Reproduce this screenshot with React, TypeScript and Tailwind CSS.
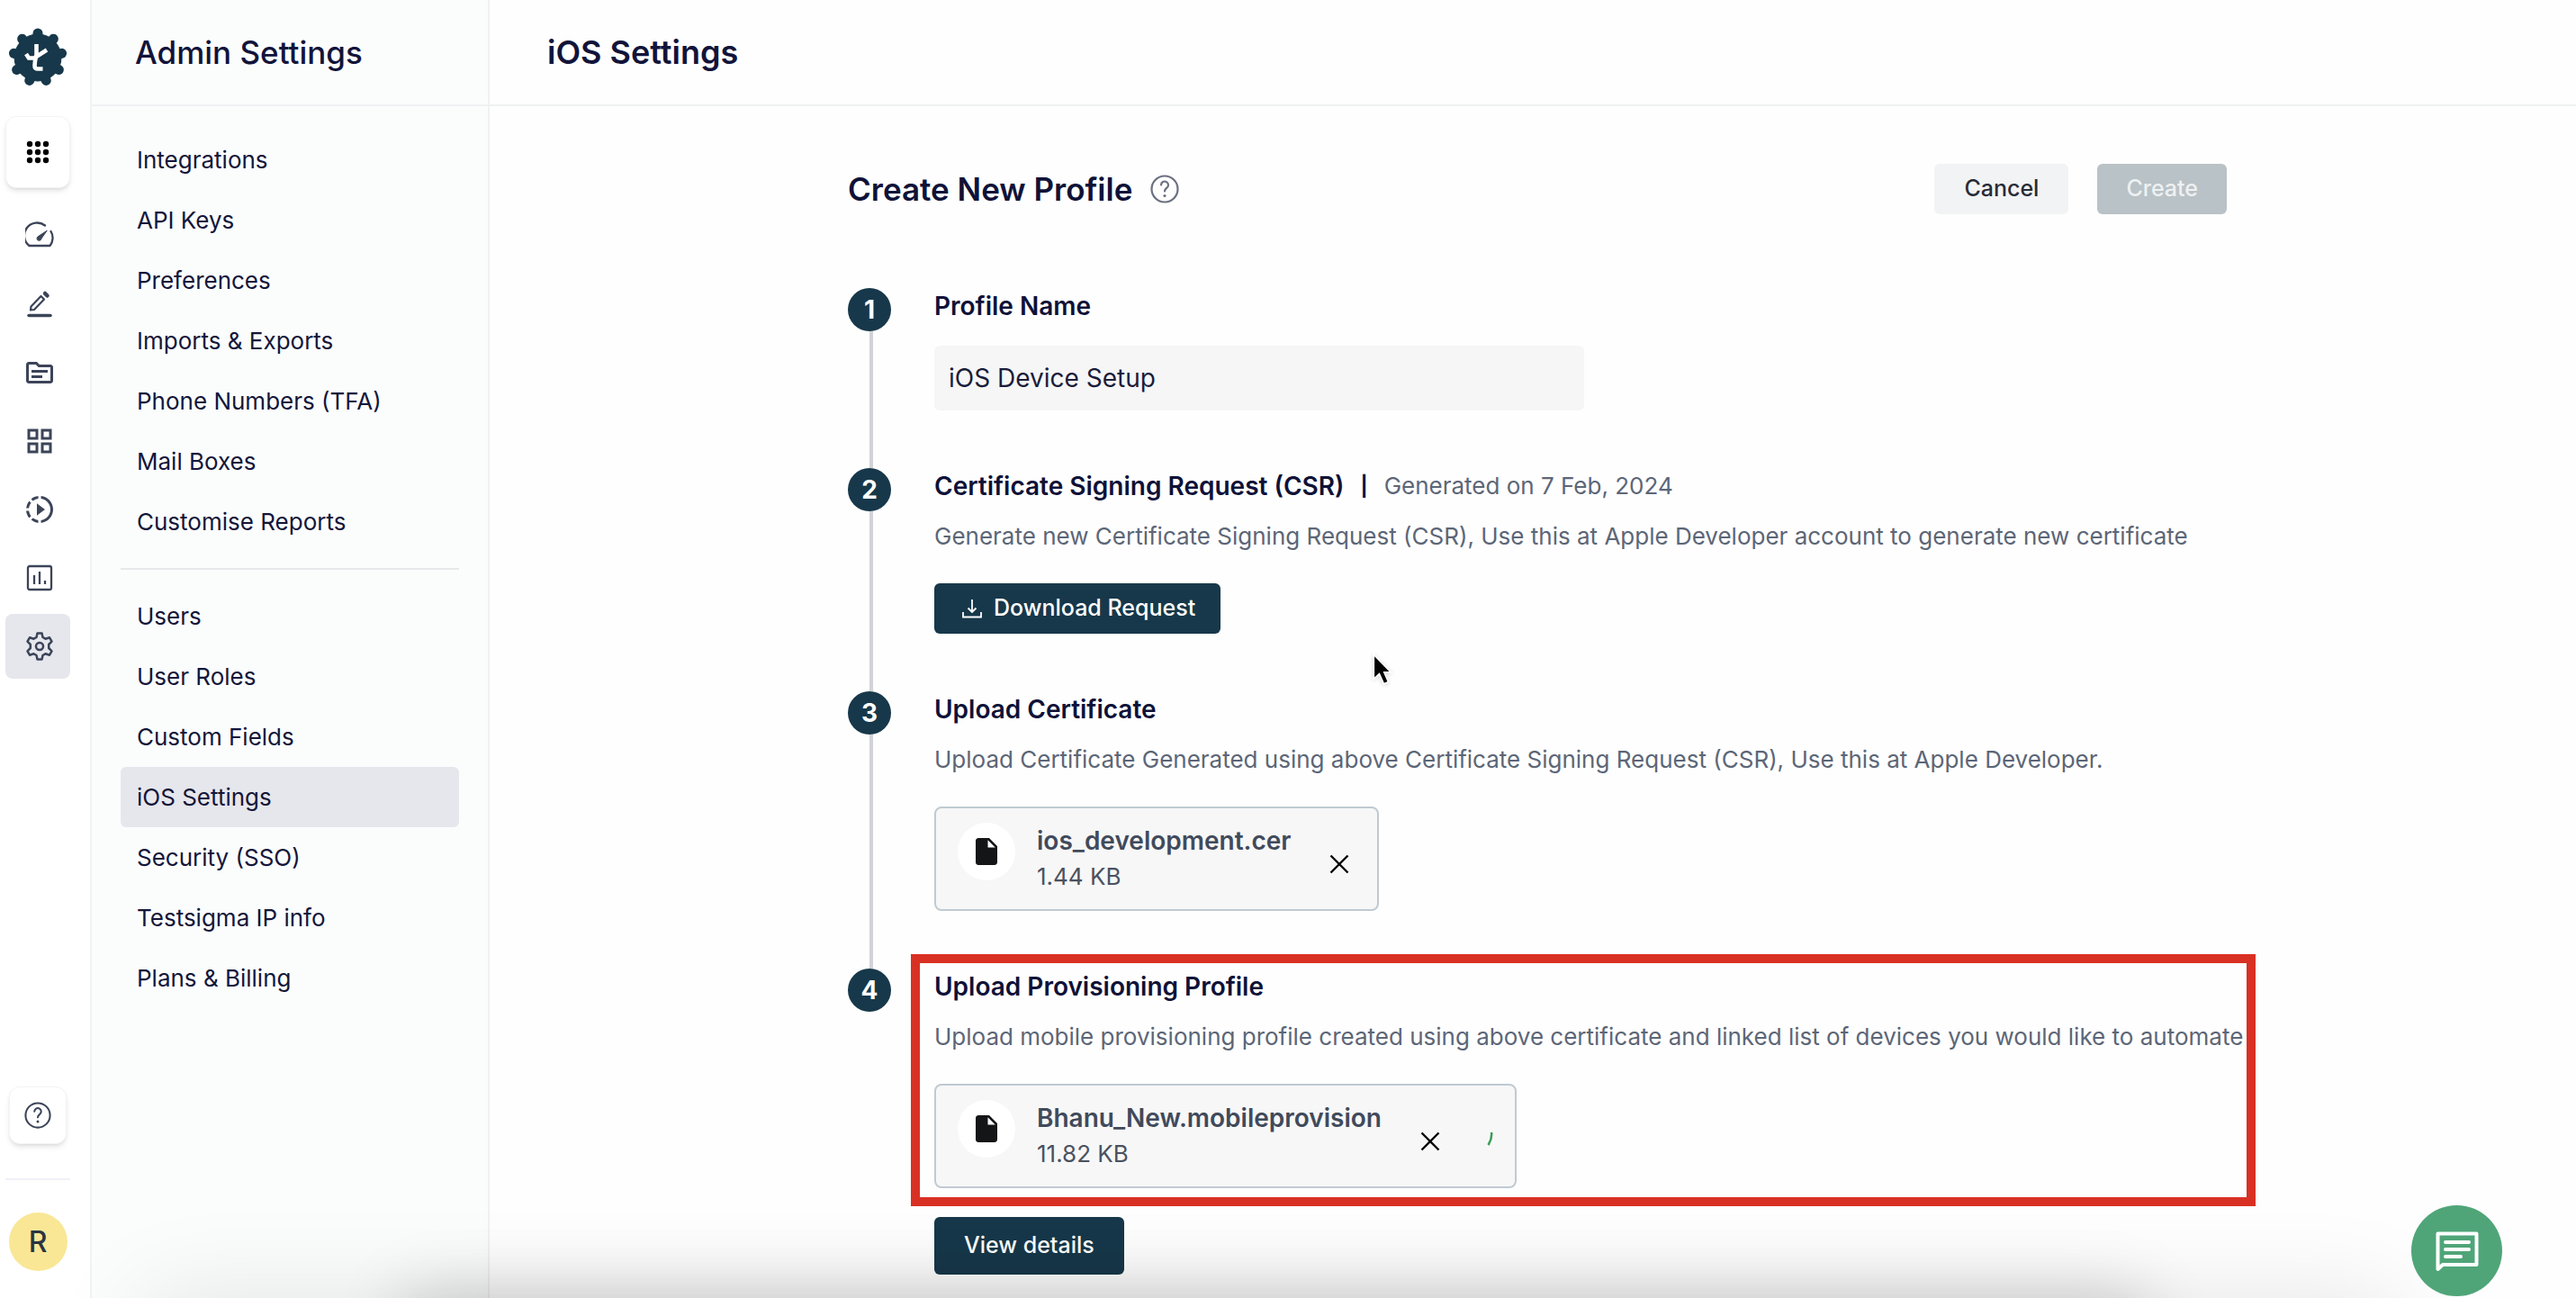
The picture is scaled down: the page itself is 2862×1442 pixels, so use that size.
import { useState } from 'react'
import { MdInsertDriveFile, MdOutlineGridView, MdOutlineSource, MdSlowMotionVideo } from 'react-icons/md'

const workspaceLinks = ['Integrations', 'API Keys', 'Preferences', 'Imports & Exports', 'Phone Numbers (TFA)', 'Mail Boxes', 'Customise Reports']
const accountLinks = ['Users', 'User Roles', 'Custom Fields', 'iOS Settings', 'Security (SSO)', 'Testsigma IP info', 'Plans & Billing']

// nine round teeth around the logo body
const teeth = Array.from({ length: 9 }, (_, i) => {
  const a = (i * 2 * Math.PI) / 9 - Math.PI / 2
  return { x: 33 + 27 * Math.cos(a), y: 33 + 27 * Math.sin(a) }
})

function Logo() {
  return (
    <svg viewBox="0 0 66 66" className="size-[66px]" aria-hidden="true">
      <g fill="#17384a" stroke="#17384a">
        <circle cx="33" cy="33" r="26" />
        {teeth.map((t, i) => (
          <line key={i} x1="33" y1="33" x2={t.x} y2={t.y} strokeWidth="11" strokeLinecap="round" />
        ))}
      </g>
      <g fill="none" stroke="#fff" strokeWidth="4.6">
        <path d="M31.5 18 V30 Q29.5 37 29.5 42 Q29.5 45.500 33 45.500 H38.500" />
        <path d="M20 29 L23 33.500 H29 L43 24.500" />
      </g>
    </svg>
  )
}

function AppsIcon() {
  return (
    <svg viewBox="0 0 26 26" className="size-[26px]" fill="currentColor" aria-hidden="true">
      {[4, 13, 22].map((y) => [4, 13, 22].map((x) => <circle key={`${x}-${y}`} cx={x} cy={y} r="3.2" />))}
    </svg>
  )
}

function GaugeIcon() {
  return (
    <svg viewBox="0 0 32 32" className="size-8" fill="none" stroke="currentColor" strokeWidth="2.3" strokeLinecap="round" strokeLinejoin="round" aria-hidden="true">
      <path d="M22 4.500 A14 14 0 0 0 4.500 27 H27.500 A14 14 0 0 0 28.500 11" />
      <path d="M24 10.500 L18 19 A2.500 2.500 0 1 1 14.500 16.500 Z" fill="currentColor" strokeWidth="1" />
    </svg>
  )
}

function PencilIcon() {
  return (
    <svg viewBox="0 0 32 32" className="size-8" fill="none" stroke="currentColor" strokeWidth="2.2" strokeLinejoin="round" aria-hidden="true">
      <path d="M6 22.500 L6.500 18.500 L17.500 7 L21 10.500 L10 22 Z" />
      <path d="M22 4 L24.500 6.500" strokeWidth="4.500" strokeLinecap="round" />
      <path d="M4 28.500 H28" strokeWidth="3.500" strokeLinecap="round" />
    </svg>
  )
}

function ChartIcon() {
  return (
    <svg viewBox="0 0 32 32" className="size-8" fill="none" stroke="currentColor" strokeWidth="2.3" aria-hidden="true">
      <rect x="3" y="3" width="26" height="26" rx="2" />
      <path d="M10 13 V23 M16 9 V23 M22 19 V23" />
    </svg>
  )
}

function GearIcon() {
  return (
    <svg viewBox="0 0 32 32" className="size-8" fill="none" stroke="currentColor" strokeWidth="2.5" strokeLinejoin="round" aria-hidden="true">
      <path d="M13.500 1.500 H18.500 L19.500 6 L22.500 7.700 L27 6.300 L29.500 10.700 L26.200 14 V18 L29.500 21.300 L27 25.700 L22.500 24.300 L19.500 26 L18.500 30.500 H13.500 L12.500 26 L9.500 24.300 L5 25.700 L2.500 21.300 L5.800 18 V14 L2.500 10.700 L5 6.300 L9.500 7.700 L12.500 6 Z" />
      <circle cx="16" cy="16" r="4" />
    </svg>
  )
}

function HelpIcon({ className }: { className: string }) {
  return (
    <svg viewBox="0 0 32 32" className={className} fill="none" stroke="currentColor" strokeWidth="2.2" strokeLinecap="round" aria-hidden="true">
      <circle cx="16" cy="16" r="14.5" />
      <path d="M12 11.500 A4 4 0 1 1 18 15 Q16 16.500 16 18.500" />
      <circle cx="16" cy="23.500" r="1.6" fill="currentColor" stroke="none" />
    </svg>
  )
}

function DownloadIcon() {
  return (
    <svg viewBox="0 0 24 24" className="size-6" fill="none" stroke="currentColor" strokeWidth="1.8" aria-hidden="true">
      <path d="M12 2 V16 M7.500 11.500 L12 16 L16.500 11.500 M2 16 V21.500 H22 V16" />
    </svg>
  )
}

function CloseIcon() {
  return (
    <svg viewBox="0 0 36 36" className="size-9" fill="none" stroke="currentColor" strokeWidth="2.4" aria-hidden="true">
      <path d="M8.500 8.500 L27.500 27.500 M27.500 8.500 L8.500 27.500" />
    </svg>
  )
}

const railIcons = [
  { label: 'Dashboard', icon: <GaugeIcon /> },
  { label: 'Create Tests', icon: <PencilIcon /> },
  { label: 'Test Data', icon: <MdOutlineSource className="size-9" /> },
  { label: 'Addons', icon: <MdOutlineGridView className="size-9" /> },
  { label: 'Runs', icon: <MdSlowMotionVideo className="size-9" /> },
  { label: 'Reports', icon: <ChartIcon /> },
  { label: 'Settings', icon: <GearIcon />, active: true },
]

function Rail() {
  return (
    <nav aria-label="Main" className="flex w-[102px] shrink-0 flex-col border-r-2 border-[#f0f3f3] bg-white pt-[31px] pb-[30px] pl-[6px] text-[#3c4459]">
      <div className="flex w-[72px] flex-col items-center">
        <a href="#" aria-label="Home"><Logo /></a>
        <button type="button" aria-label="Apps" className="mt-8 flex h-20 w-[72px] items-center justify-center rounded-xl border border-gray-100 bg-white text-black shadow-md">
          <AppsIcon />
        </button>
        <div className="mt-[17px] flex flex-col gap-1">
          {railIcons.map((item) => (
            <a
              key={item.label}
              href="#"
              aria-label={item.label}
              className={`flex size-[72px] items-center justify-center rounded-lg pl-1 ${item.active ? 'bg-[#e6e7ec]' : ''}`}
            >
              {item.icon}
            </a>
          ))}
        </div>
      </div>
      <div className="mt-auto flex w-[72px] flex-col items-center">
        <button type="button" aria-label="Help" className="flex size-16 items-center justify-center rounded-xl border border-gray-100 bg-white shadow-md">
          <HelpIcon className="size-[30px]" />
        </button>
        <hr className="mt-[38px] w-full border-t-2 border-[#f0f0f8]" />
        <button type="button" className="mt-9 size-[65px] rounded-full bg-[#f9e796] text-[32px] font-medium text-[#2b3440]">
          R
        </button>
      </div>
    </nav>
  )
}

function NavGroup({ links, active, onSelect }: { links: string[]; active: string; onSelect: (name: string) => void }) {
  return (
    <ul>
      {links.map((name) => (
        <li key={name}>
          <a
            href="#"
            onClick={() => onSelect(name)}
            className={`flex h-[67px] items-center rounded-md px-[18px] text-[26px] text-[#14163a] ${name === active ? 'bg-[#e6e7ec]' : ''}`}
          >
            {name}
          </a>
        </li>
      ))}
    </ul>
  )
}

function Sidebar() {
  const [active, setActive] = useState('iOS Settings')

  return (
    <aside className="w-[442px] shrink-0 border-r-2 border-[#eff1f2] bg-[#fbfdfd]">
      <header className="flex h-[118px] items-center border-b-2 border-[#eff1f2] px-12">
        <h2 className="text-[35px] font-medium text-[#12143a]">Admin Settings</h2>
      </header>
      <nav aria-label="Admin settings" className="px-8 pt-[26px]">
        <NavGroup links={workspaceLinks} active={active} onSelect={setActive} />
        <hr className="my-[18px] border-t-2 border-[#e6e8e9]" />
        <NavGroup links={accountLinks} active={active} onSelect={setActive} />
      </nav>
    </aside>
  )
}

function Step({ number, last = false, children }: { number: number; last?: boolean; children: React.ReactNode }) {
  return (
    <li className="flex gap-12">
      <div className="flex w-12 shrink-0 flex-col items-center">
        <span className="flex size-12 shrink-0 items-center justify-center rounded-full bg-[#17384a] text-[28px] font-bold text-white">
          {number}
        </span>
        {!last && <span className="ml-1 w-1 grow bg-[#d1d3d6]" />}
      </div>
      <div className="min-w-0 grow">{children}</div>
    </li>
  )
}

function FileCard({ name, size, loading = false }: { name: string; size: string; loading?: boolean }) {
  return (
    <div className="flex h-[116px] w-fit rounded-lg border-2 border-[#c0cad1] bg-[#f7f7f7] px-6">
      <div className="mt-4 flex size-16 items-center justify-center rounded-full bg-white text-[#141517]">
        <MdInsertDriveFile className="size-9" />
      </div>
      <div className="mt-4 ml-6">
        <div className="text-[28px]/[40px] font-semibold text-[#414a5b]">{name}</div>
        <div className="text-[26px]/[40px] text-[#4a5160]">{size}</div>
      </div>
      <button type="button" aria-label={`Remove ${name}`} className="mt-3 ml-9 self-center text-black">
        <CloseIcon />
      </button>
      {loading && (
        <svg viewBox="0 0 28 32" className="mt-2 ml-6 h-8 w-7 self-center" fill="none" stroke="#3a9d58" strokeWidth="2.5" aria-label="Uploading">
          <path d="M26 8 Q27 15 22.500 22" />
        </svg>
      )}
    </div>
  )
}

const stepTitle = 'text-[28px]/[40px] font-semibold text-[#0f1238]'
const stepText = 'mt-4 text-[26px]/[40px] text-[#5c6677] xl:whitespace-nowrap'

function ProfileForm() {
  const [name, setName] = useState('iOS Device Setup')

  return (
    <form className="mx-auto max-w-[1532px] pt-16">
      <div className="flex items-center">
        <h2 className="text-[35px]/[56px] font-semibold text-[#0f1238]">Create New Profile</h2>
        <button type="button" aria-label="Help" className="ml-5 text-[#6b7080]">
          <HelpIcon className="size-8" />
        </button>
        <button type="button" className="ml-auto h-14 rounded-md bg-[#f1f3f5] px-[33px] text-[25px] font-medium text-[#272b38]">Cancel</button>
        <button type="button" disabled className="ml-8 h-14 rounded-md bg-[#b9c2c6] px-8 text-[25px] font-medium text-[#eef1f2]">Create</button>
      </div>

      <ol className="mt-[82px]">
        <Step number={1}>
          <label htmlFor="profile-name" className={`block ${stepTitle}`}>Profile Name</label>
          <input
            id="profile-name"
            value={name}
            onChange={(e) => setName(e.target.value)}
            className="mt-6 mb-16 block h-[72px] w-[722px] rounded-md bg-[#f6f6f6] px-4 text-[28px] text-[#1b1d3a]"
          />
        </Step>
        <Step number={2}>
          <div className="flex text-[26px]/[40px]">
            <h3 className={stepTitle}>Certificate Signing Request (CSR)</h3>
            <span className="mx-[18px] text-[22px]/[40px] font-bold text-[#0f1238]">|</span>
            <span className="text-[#5c6677]">Generated on 7 Feb, 2024</span>
          </div>
          <p className={stepText}>Generate new Certificate Signing Request (CSR), Use this at Apple Developer account to generate new certificate</p>
          <button type="button" className="mt-8 mb-16 flex h-14 items-center gap-3 rounded-md bg-[#17384a] pr-7 pl-[30px] text-[25px] font-medium text-white">
            <DownloadIcon />
            Download Request
          </button>
        </Step>
        <Step number={3}>
          <h3 className={stepTitle}>Upload Certificate</h3>
          <p className={stepText}>Upload Certificate Generated using above Certificate Signing Request (CSR), Use this at Apple Developer.</p>
          <div className="mt-8 mb-16">
            <FileCard name="ios_development.cer" size="1.44 KB" />
          </div>
        </Step>
        <Step number={4} last>
          <div className="relative">
            <div className="pointer-events-none absolute -top-4 -right-8 -bottom-5 -left-[26px] border-10 border-[#d93024]" />
            <h3 className={stepTitle}>Upload Provisioning Profile</h3>
            <p className={stepText}>Upload mobile provisioning profile created using above certificate and linked list of devices you would like to automate</p>
            <div className="mt-8">
              <FileCard name="Bhanu_New.mobileprovision" size="11.82 KB" loading />
            </div>
          </div>
          <button type="button" className="mt-8 h-16 rounded-md bg-[#17384a] px-[33px] text-[25px] font-medium text-white">View details</button>
        </Step>
      </ol>
    </form>
  )
}

export default function App() {
  return (
    <div className="relative flex h-screen overflow-hidden bg-[#fefefe] font-[Inter,sans-serif]">
      <Rail />
      <Sidebar />
      <main className="min-w-0 grow">
        <header className="flex h-[118px] items-center border-b-2 border-[#eff1f2] px-16">
          <h1 className="text-[36px] font-semibold text-[#12143a]">iOS Settings</h1>
        </header>
        <div className="pl-[10px]">
          <ProfileForm />
        </div>
      </main>

      {/* soft shade along the bottom edge */}
      <div className="pointer-events-none absolute top-full right-[480px] left-[450px] h-40 shadow-[0_0_80px_rgba(0,0,0,0.2)]" />
      <div className="pointer-events-none absolute top-full right-[200px] left-[160px] h-40 shadow-[0_0_110px_rgba(0,0,0,0.1)]" />

      <svg viewBox="0 0 24 32" className="pointer-events-none absolute top-[725px] left-[1524px] h-9 w-[27px] drop-shadow-sm" aria-hidden="true">
        <path d="M2 2 V26 L7.500 21 L12 31 L16.500 29 L12.300 19.500 H19 Z" fill="#000" stroke="#fff" strokeWidth="1.5" />
      </svg>

      <button type="button" aria-label="Chat" className="absolute right-[82px] bottom-[2px] flex size-[101px] items-center justify-center rounded-full bg-[#4fa578] text-white">
        <svg viewBox="0 0 48 48" className="size-12" fill="none" stroke="currentColor" strokeWidth="4" strokeLinejoin="round" aria-hidden="true">
          <path d="M2.500 44 V4.500 H45.500 V39 H8 Z" />
          <path d="M11 14 H37 M11 22 H37 M11 30 H28" strokeLinecap="round" />
        </svg>
      </button>
    </div>
  )
}
